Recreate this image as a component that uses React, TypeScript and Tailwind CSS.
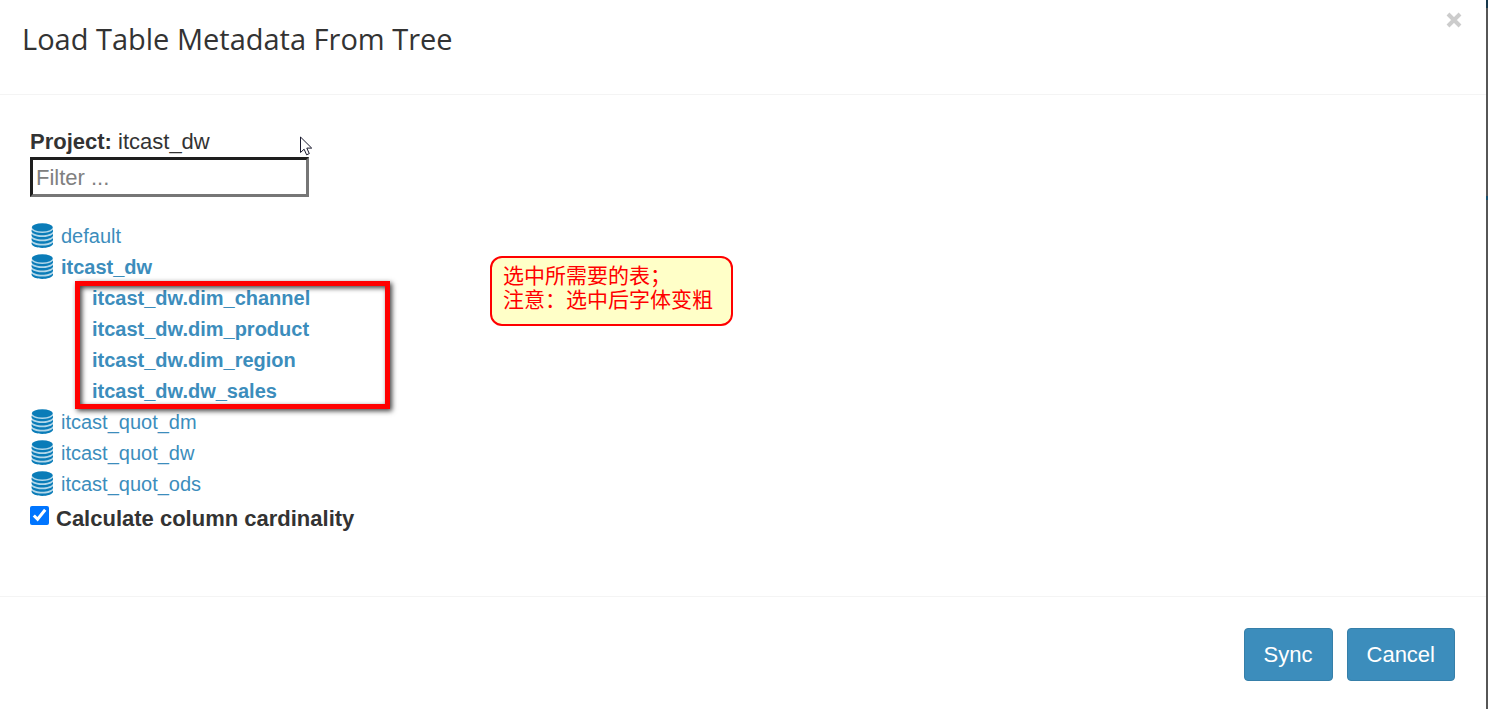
import { useState } from "react";

type Database = { name: string; tables?: string[] };

const databases: Database[] = [
  { name: "default" },
  {
    name: "itcast_dw",
    tables: [
      "itcast_dw.dim_channel",
      "itcast_dw.dim_product",
      "itcast_dw.dim_region",
      "itcast_dw.dw_sales",
    ],
  },
  { name: "itcast_quot_dm" },
  { name: "itcast_quot_dw" },
  { name: "itcast_quot_ods" },
];

function DatabaseIcon() {
  return (
    <svg viewBox="0 0 22 25" className="mt-[2px] h-[25px] w-[22px] shrink-0" aria-hidden="true">
      <path d="M.8 4.500v16.500C1.500 23.600 6 24.800 11.300 24.800S21.200 23.600 21.900 21V4.500z" fill="#b4d8ea" />
      <g fill="#0a7cb8">
        <path d="M.6 6.800C3 9 7 9.900 11.300 9.900s8.400-.9 10.700-3.100v1.700c-1.500 2.500-6 3.700-10.700 3.700S2 11 .6 8.500z" />
        <path d="M.6 11C3 13.200 7 14.100 11.300 14.100s8.400-.9 10.700-3.100v1.800c-1.500 2.500-6 3.700-10.700 3.700S2 15.300.6 12.800z" />
        <path d="M.6 15.200C3 17.400 7 18.300 11.300 18.300s8.400-.9 10.700-3.100V17c-1.500 2.500-6 3.700-10.700 3.700S2 19.500.6 17z" />
        <path d="M.6 19.400C3 21.600 7 22.500 11.300 22.500s8.400-.9 10.700-3.100V21c-1.500 2.600-6 3.900-10.700 3.900S2 23.600.6 21z" />
        <ellipse cx="11.300" cy="4.300" rx="10.500" ry="4.100" />
      </g>
    </svg>
  );
}

function PointerIcon() {
  return (
    <svg viewBox="0 0 13 20" className="absolute top-[10px] left-[270px] h-5 w-[13px]" aria-hidden="true">
      <path
        d="M.5 1v15.500l3.600-3.300 2.500 5.600 2.700-1.200-2.500-5.500h4.900z"
        fill="#fff"
        stroke="#1a1a2e"
      />
    </svg>
  );
}

function DatabaseNode({ name, tables }: Database) {
  return (
    <li>
      <a href="#" className={tables ? "flex h-[31px] items-start gap-2 pl-px font-bold" : "flex h-[31px] items-start gap-2 pl-px"}>
        <DatabaseIcon />
        {name}
      </a>
      {tables && (
        <div className="relative">
          <ul className="pl-[62px] font-bold">
            {tables.map((table) => (
              <li key={table} className="h-[31px]">
                <a href="#">{table}</a>
              </li>
            ))}
          </ul>
          <div className="pointer-events-none absolute -top-[2px] -bottom-[2px] left-[45px] w-[315px] border-[5px] border-[#ff0000] shadow-[2px_2px_5px_rgba(0,0,0,0.75),inset_2px_2px_5px_rgba(0,0,0,0.75)]" />
          <p className="absolute -top-[27px] left-[460px] h-[70px] w-[243px] rounded-xl border-2 border-[#ff0000] bg-[#ffffc8] px-[11px] pt-1 font-['Noto_Sans_CJK_SC',sans-serif] text-[21px] leading-6 whitespace-nowrap text-[#ff0000]">
            选中所需要的表；
            <br />
            注意：选中后字体变粗
          </p>
        </div>
      )}
    </li>
  );
}

export default function App() {
  const [filter, setFilter] = useState("");
  const [cardinality, setCardinality] = useState(true);

  return (
    <div className="flex min-h-screen bg-white font-['Liberation_Sans',Arial,sans-serif] text-[22px] text-[#333333]">
      <div role="dialog" aria-labelledby="dialog-title" className="flex min-w-0 flex-1 flex-col">
        <header className="flex items-start justify-between border-b border-[#f4f4f4] pr-6 pb-[35px] pl-[22px]">
          <h1 id="dialog-title" className="pt-[19px] font-['Open_Sans',sans-serif] text-[29px] leading-10">
            Load Table Metadata From Tree
          </h1>
          <button type="button" aria-label="Close" className="mt-3 text-[#cccccc]">
            <svg viewBox="0 0 16 16" className="size-4" aria-hidden="true">
              <path d="M2 2l12 12M14 2L2 14" stroke="currentColor" strokeWidth="4" />
            </svg>
          </button>
        </header>

        <main className="flex-1 px-[30px] pt-[31px]">
          <div className="relative">
            <p className="leading-[31px]">
              <b>Project:</b> itcast_dw
            </p>
            <PointerIcon />
          </div>
          <input
            type="text"
            aria-label="Filter"
            placeholder="Filter ..."
            value={filter}
            onChange={(event) => setFilter(event.target.value)}
            className="block h-10 w-[279px] border-[3px] border-t-[#1e1e1e] border-r-[#767676] border-b-[#767676] border-l-[#1e1e1e] px-[3px] pt-[2px] placeholder:text-[#808080]"
          />
          <ul className="mt-6 text-xl leading-[31px] text-[#3c8dbc]">
            {databases.map((database) => (
              <DatabaseNode key={database.name} {...database} />
            ))}
          </ul>
          <label className="mt-[3px] flex items-start gap-[7px] leading-[31px] font-bold">
            <input
              type="checkbox"
              checked={cardinality}
              onChange={(event) => setCardinality(event.target.checked)}
              className="mt-[3px] size-[19px]"
            />
            Calculate column cardinality
          </label>
        </main>

        <footer className="flex justify-end gap-[14px] border-t border-[#f4f4f4] px-[31px] pt-[31px] pb-7 text-white">
          <button type="button" className="h-[53px] rounded border border-[#367fa9] bg-[#3c8dbc] px-[19px]">
            Sync
          </button>
          <button type="button" className="h-[53px] rounded border border-[#367fa9] bg-[#3c8dbc] px-[19px]">
            Cancel
          </button>
        </footer>
      </div>
      <div className="flex w-[2px] flex-col bg-[#565656]">
        <div className="h-2 bg-[#16374a]" />
        <div className="mt-[188px] h-1 bg-[#16506e]" />
      </div>
    </div>
  );
}
